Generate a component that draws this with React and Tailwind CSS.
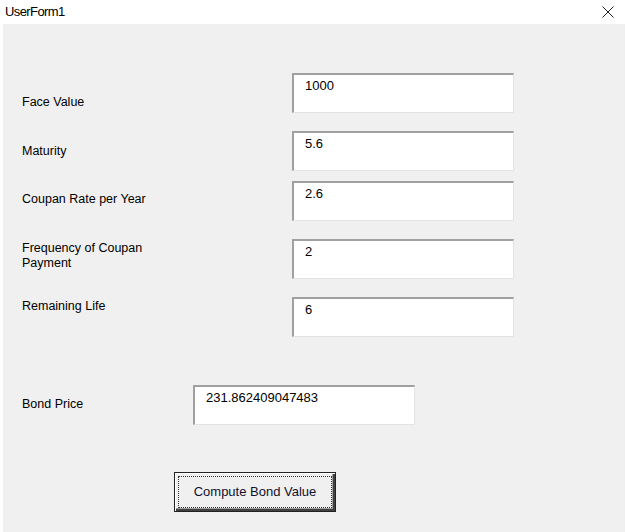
import React from 'react';

const fields = [
  { label: 'Face Value', value: '1000', h: 'h-[58px]', pt: 'pt-[22px]' },
  { label: 'Maturity', value: '5.6', h: 'h-[50px]', pt: 'pt-[13px]' },
  { label: 'Coupan Rate per Year', value: '2.6', h: 'h-[58px]', pt: 'pt-[11px]' },
  { label: 'Frequency of Coupan Payment', value: '2', h: 'h-[58px]', pt: 'pt-[2px]' },
  { label: 'Remaining Life', value: '6', h: 'h-[88px]', pt: 'pt-[2px]' },
];

const TextBox = ({ value }) => (
  <div className="w-[222px] h-[40px] bg-white border-t-2 border-l-2 border-r border-b border-t-[#a0a0a0] border-l-[#a0a0a0] border-r-[#e3e3e3] border-b-[#e3e3e3] pl-[11px] pt-[3px] text-[13px] leading-[15px] text-black">
    {value}
  </div>
);

const App = () => {
  return (
    <div className="w-[627px] h-[532px] bg-white font-['Liberation_Sans',Arial,sans-serif] overflow-hidden">
      {/* title bar */}
      <div className="h-[24px] flex items-center justify-between pl-[5px] pr-[13px]">
        <span className="text-[13px] leading-[24px] text-black tracking-[-0.6px]">UserForm1</span>
        <svg width="12" height="12" viewBox="0 0 12 12" className="text-[#222]">
          <path d="M0.5 0.5 L11.5 11.5 M11.5 0.5 L0.5 11.5" stroke="currentColor" strokeWidth="1" fill="none" />
        </svg>
      </div>

      {/* client area */}
      <div className="ml-[3px] w-[622px] h-[508px] bg-[#f0f0f0] flex flex-col pt-[49px]">
        {fields.map((f) => (
          <div key={f.label} className={`flex shrink-0 ${f.h}`}>
            <div className={`w-[289px] shrink-0 pl-[19px] ${f.pt} text-[12.5px] leading-[15px] text-black`}>
              <div className="w-[130px]">{f.label}</div>
            </div>
            <TextBox value={f.value} />
          </div>
        ))}

        <div className="flex shrink-0 h-[87px]">
          <div className="w-[190px] shrink-0 pl-[19px] pt-[12px] text-[12.5px] leading-[15px] text-black">Bond Price</div>
          <TextBox value="231.862409047483" />
        </div>

        <div className="pl-[171px]">
          <button
            type="button"
            className="w-[162px] h-[40px] bg-[#f0f0f0] border border-[#222] p-[3px] shadow-[inset_1px_1px_0_#ffffff,inset_-2px_-2px_0_#404040,inset_-3px_-3px_0_#a0a0a0]"
          >
            <div className="w-full h-full border border-dotted border-[#333] flex items-center justify-center text-[13px] text-[#101030]">
              Compute Bond Value
            </div>
          </button>
        </div>
      </div>
    </div>
  );
};

export default App;
